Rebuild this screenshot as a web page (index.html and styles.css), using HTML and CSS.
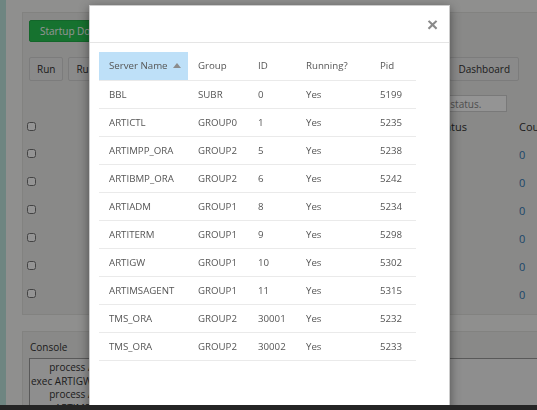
FILE: index.html
```html
<!DOCTYPE html>
<html lang="en">
<head>
    <meta charset="UTF-8">
    <title>Servers</title>
    <link rel="stylesheet" href="styles.css">
</head>
<body>
<div class="layout">
    <div class="side"></div>
    <div class="main">
        <div class="panel">
            <button class="btn btn-green">Startup Domain</button>
            <div class="toolbar">
                <button class="btn">Run</button>
                <button class="btn">Run All</button>
                <button class="btn">Stop</button>
                <button class="btn dash">Dashboard</button>
            </div>
            <div class="search-row">
                <input type="text" class="search" placeholder="Search for status.">
            </div>
            <table class="grid">
                <thead>
                <tr><th class="chk"><input type="checkbox"></th><th>Name</th><th class="st">Status</th><th class="cnt">Count</th></tr>
                </thead>
                <tbody>
                <tr><td class="chk"><input type="checkbox"></td><td>GROUP0</td><td class="st"></td><td class="cnt"><a>0</a></td></tr>
                <tr><td class="chk"><input type="checkbox"></td><td>GROUP1</td><td class="st"></td><td class="cnt"><a>0</a></td></tr>
                <tr><td class="chk"><input type="checkbox"></td><td>GROUP2</td><td class="st"></td><td class="cnt"><a>0</a></td></tr>
                <tr><td class="chk"><input type="checkbox"></td><td>GROUP3</td><td class="st"></td><td class="cnt"><a>0</a></td></tr>
                <tr><td class="chk"><input type="checkbox"></td><td>GROUP4</td><td class="st"></td><td class="cnt"><a>0</a></td></tr>
                <tr><td class="chk"><input type="checkbox"></td><td>SUBR</td><td class="st"></td><td class="cnt"><a>0</a></td></tr>
                </tbody>
            </table>
        </div>
        <div class="console">
            <div class="console-title">Console</div>
            <pre class="console-log">       process ARTIGW
exec ARTIGW -A -- -L TI
       process ARTIMSAGENT
exec ARTIMSAGENT -A -- -LTI ..</pre>
        </div>
    </div>
</div>

<div class="backdrop"></div>

<div class="modal">
    <div class="modal-head">
        <span class="close">&times;</span>
    </div>
    <div class="modal-body">
        <table class="servers">
            <colgroup>
                <col class="c-name"><col class="c-group"><col class="c-id"><col class="c-run"><col class="c-pid">
            </colgroup>
            <thead>
            <tr>
                <th class="sorted">Server Name <span class="arrow"></span></th>
                <th>Group</th>
                <th>ID</th>
                <th>Running?</th>
                <th>Pid</th>
            </tr>
            </thead>
            <tbody>
            <tr><td>BBL</td><td>SUBR</td><td>0</td><td>Yes</td><td>5199</td></tr>
            <tr><td>ARTICTL</td><td>GROUP0</td><td>1</td><td>Yes</td><td>5235</td></tr>
            <tr><td>ARTIMPP_ORA</td><td>GROUP2</td><td>5</td><td>Yes</td><td>5238</td></tr>
            <tr><td>ARTIBMP_ORA</td><td>GROUP2</td><td>6</td><td>Yes</td><td>5242</td></tr>
            <tr><td>ARTIADM</td><td>GROUP1</td><td>8</td><td>Yes</td><td>5234</td></tr>
            <tr><td>ARTITERM</td><td>GROUP1</td><td>9</td><td>Yes</td><td>5298</td></tr>
            <tr><td>ARTIGW</td><td>GROUP1</td><td>10</td><td>Yes</td><td>5302</td></tr>
            <tr><td>ARTIMSAGENT</td><td>GROUP1</td><td>11</td><td>Yes</td><td>5315</td></tr>
            <tr><td>TMS_ORA</td><td>GROUP2</td><td>30001</td><td>Yes</td><td>5232</td></tr>
            <tr><td>TMS_ORA</td><td>GROUP2</td><td>30002</td><td>Yes</td><td>5233</td></tr>
            </tbody>
        </table>
    </div>
</div>

<div class="taskbar"></div>
</body>
</html>
```

FILE: styles.css
```css
*{box-sizing:border-box;}
html,body{height:100%;}
body{margin:0;background:#f6f6f4;color:#333;font-family:"Open Sans",sans-serif;font-size:10px;overflow:hidden;}
.layout{display:flex;height:100%;}
.side{width:6px;background:#bde6df;flex:none;}
.main{flex:1;padding:12px 0 0 16px;display:flex;flex-direction:column;gap:16px;min-width:0;margin-right:-40px;}
.panel{background:#ececea;border:1px solid #e0e0dc;padding:7px 17px 6px 6px;}
.btn{font:inherit;font-size:10px;border:1px solid #d6d6d6;background:#eeeeee;color:#333;border-radius:2px;padding:0 7px;height:24px;cursor:pointer;}
.btn-green{background:#27c552;border-color:#21b049;color:#fff;height:22px;padding:0 10px;}
.toolbar{display:flex;gap:5px;margin-top:15px;padding-right:40px;}
.dash{margin-left:auto;padding:0 8px;}
.search-row{display:flex;justify-content:flex-end;margin-top:14px;padding-right:52px;}
.search{width:110px;height:17px;border:1px solid #d0d0d0;background:#fff;font:inherit;font-size:10px;padding:0 2px;}
.search::placeholder{color:#888;}
.grid{width:calc(100% + 3px);border-collapse:collapse;margin:0 0 0 -3px;}
.grid th{font-weight:normal;text-align:left;height:28px;padding:0;font-size:11px;}
.grid td{height:28px;padding:0;}
.grid td.chk input{margin-top:2px;}
.grid .chk{width:73px;padding-left:1px;}
.grid input{width:9px;height:9px;margin:0;}
.grid .st{width:84px;}
.grid .cnt{width:40px;}
.grid a{color:#337ab7;font-size:11px;}
.console{background:#ececea;border:1px solid #e0e0dc;padding:8px 0 0 6px;flex:1;}
.console-title{font-size:10px;line-height:14px;margin-bottom:4px;padding-left:1px;}
.console-log{margin:0;border:1px solid #9a9a9a;background:#f4f4f4;font-family:"Open Sans",sans-serif;font-size:10px;line-height:13.5px;padding:2px 1px;height:60px;overflow:hidden;}
.backdrop{position:fixed;inset:0;background:rgba(0,0,0,.42);}
.modal{position:absolute;left:89px;top:5px;width:361px;bottom:-20px;background:#fff;box-shadow:0 3px 10px rgba(0,0,0,.45);border:1px solid rgba(0,0,0,.2);}
.modal-head{height:37px;border-bottom:1px solid #e5e5e5;display:flex;justify-content:flex-end;align-items:center;padding-right:11px;}
.close{font-size:19px;font-weight:bold;color:#8a8a8a;line-height:1;margin-top:1px;font-family:"Liberation Sans",sans-serif;}
.modal-body{padding:9px 33px 0 9px;}
.servers{width:317px;border-collapse:collapse;color:#555;table-layout:fixed;font-size:9.7px;}
.c-name{width:89px;}
.c-group{width:60px;}
.c-id{width:48px;}
.c-run{width:74px;}
.c-pid{width:46px;}
.servers th{font-weight:normal;text-align:left;height:28px;padding:0 10px;white-space:nowrap;}
.servers th.sorted{background:#bee0f8;}
.arrow{display:inline-block;width:0;height:0;border-left:4.5px solid transparent;border-right:4.5px solid transparent;border-bottom:5px solid #8c8c8c;margin-left:3px;vertical-align:1px;}
.servers td{height:28px;padding:0 10px;border-top:1px solid #eaeaea;white-space:nowrap;}
.servers tbody tr:last-child td{border-bottom:1px solid #eaeaea;}
.taskbar{position:fixed;left:0;right:0;bottom:0;height:5px;background:#252525;}
```
